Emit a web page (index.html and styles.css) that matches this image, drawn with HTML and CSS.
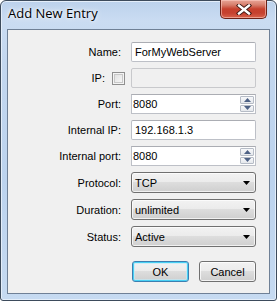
FILE: index.html
```html
<!DOCTYPE html>
<html>
<head>
<meta charset="utf-8">
<link rel="stylesheet" href="styles.css">
</head>
<body>
<div class="window">
  <div class="titlebar">
    <span class="title">Add New Entry</span>
    <div class="close">
      <svg width="16" height="11" viewBox="0 0 16 11">
        <path d="M3 1.5 L13 9.5 M13 1.5 L3 9.5" stroke="#3a1510" stroke-width="4.2" stroke-linecap="square"/>
        <path d="M3 1.5 L13 9.5 M13 1.5 L3 9.5" stroke="#ffffff" stroke-width="2.4" stroke-linecap="square"/>
      </svg>
    </div>
  </div>
  <div class="client">
    <div class="form">
      <label class="lbl">Name:</label>
      <div class="field text"><span>ForMyWebServer</span></div>

      <div class="lbl ip"><span>IP:</span><span class="check"></span></div>
      <div class="field text disabled"></div>

      <label class="lbl">Port:</label>
      <div class="field text spin"><span>8080</span>
        <div class="spinbtns">
          <div class="sb up"><svg width="7" height="4" viewBox="0 0 7 4"><path d="M0 4 L3.5 0 L7 4 Z" fill="#4d6185"/></svg></div>
          <div class="sb down"><svg width="7" height="4" viewBox="0 0 7 4"><path d="M0 0 L7 0 L3.5 4 Z" fill="#4d6185"/></svg></div>
        </div>
      </div>

      <label class="lbl">Internal IP:</label>
      <div class="field text"><span>192.168.1.3</span></div>

      <label class="lbl">Internal port:</label>
      <div class="field text spin"><span>8080</span>
        <div class="spinbtns">
          <div class="sb up"><svg width="7" height="4" viewBox="0 0 7 4"><path d="M0 4 L3.5 0 L7 4 Z" fill="#4d6185"/></svg></div>
          <div class="sb down"><svg width="7" height="4" viewBox="0 0 7 4"><path d="M0 0 L7 0 L3.5 4 Z" fill="#4d6185"/></svg></div>
        </div>
      </div>

      <label class="lbl">Protocol:</label>
      <div class="field select"><span>TCP</span><svg class="arrow" width="7" height="4" viewBox="0 0 7 4"><path d="M0 0 L7 0 L3.5 4 Z" fill="#000"/></svg></div>

      <label class="lbl">Duration:</label>
      <div class="field select"><span>unlimited</span><svg class="arrow" width="7" height="4" viewBox="0 0 7 4"><path d="M0 0 L7 0 L3.5 4 Z" fill="#000"/></svg></div>

      <label class="lbl">Status:</label>
      <div class="field select"><span>Active</span><svg class="arrow" width="7" height="4" viewBox="0 0 7 4"><path d="M0 0 L7 0 L3.5 4 Z" fill="#000"/></svg></div>
    </div>
    <div class="buttons">
      <div class="btn default">OK</div>
      <div class="btn">Cancel</div>
    </div>
  </div>
</div>
</body>
</html>
```
FILE: styles.css
```css
html, body {
  margin: 0;
  padding: 0;
  background: #ffffff;
}
.window {
  box-sizing: border-box;
  width: 277px;
  height: 301px;
  border: 1px solid #3d4b5c;
  border-radius: 6px 6px 3px 3px;
  background: linear-gradient(180deg, #bcd2ec 0px, #cadcf2 20px, #c3d7ef 60px, #bcd3ee 180px, #c6daf1 300px);
  box-shadow: inset 0 0 0 1px #e4eefa;
  padding: 0 6px 6px 6px;
  display: flex;
  flex-direction: column;
  font-family: "Liberation Sans", Arial, sans-serif;
  font-size: 11px;
  color: #000;
}
.titlebar {
  height: 28px;
  display: flex;
  align-items: flex-start;
  position: relative;
}
.title {
  font-family: "Open Sans", "Noto Sans", sans-serif;
  font-size: 13px;
  color: #000;
  margin-left: 1px;
  margin-top: 3px;
  text-shadow: 0 0 6px #ffffff, 0 0 3px #ffffff;
}
.close {
  position: absolute;
  right: 3px;
  top: -1px;
  width: 47px;
  height: 19px;
  box-sizing: border-box;
  border: 1px solid #6b2218;
  border-top: none;
  border-radius: 0 0 5px 5px;
  background: linear-gradient(180deg, #e8a597 0px, #d77e6c 5px, #c6402d 9px, #c5412f 13px, #d8624b 18px);
  box-shadow: inset 0 0 0 1px rgba(255,210,200,0.55);
  display: flex;
  align-items: center;
  justify-content: center;
}
.client {
  flex: 1;
  box-sizing: border-box;
  border: 1px solid #6f8096;
  background: #f0f0f0;
  padding: 12px 0 0 0;
}
.form {
  display: grid;
  grid-template-columns: 118px 125px;
  column-gap: 5px;
  row-gap: 6px;
}
.lbl {
  display: flex;
  align-items: center;
  justify-content: flex-end;
  padding-right: 5px;
  height: 20px;
  align-self: center;
}
.lbl.ip {
  padding-right: 1px;
}
.check {
  display: inline-block;
  box-sizing: border-box;
  width: 13px;
  height: 13px;
  margin-left: 7px;
  border: 1px solid #8f8f8f;
  background: linear-gradient(135deg, #dcdcdc, #fbfbfb);
  box-shadow: inset 0 0 0 1px #f4f4f4, inset 0 0 0 2px #c8c8c8;
}
.field {
  box-sizing: border-box;
  height: 20px;
  display: flex;
  align-items: center;
  position: relative;
}
.text {
  background: #fff;
  border: 1px solid #bdc0c7;
  border-top-color: #abadb3;
  border-radius: 2px;
  padding-left: 3px;
}
.disabled {
  background: #f0f0f0;
  border-color: #c8c9cc;
}
.spin {
  border-radius: 0;
  padding-left: 1px;
}
.spinbtns {
  position: absolute;
  right: 1px;
  top: 1px;
  bottom: 1px;
  width: 14px;
  display: flex;
  flex-direction: column;
  gap: 1px;
}
.sb {
  flex: 1;
  box-sizing: border-box;
  border: 1px solid #b6bcc6;
  border-radius: 1px;
  background: linear-gradient(180deg, #f7f8fa, #e5e8ec);
  display: flex;
  align-items: center;
  justify-content: center;
}
.select {
  height: 21px;
  border: 1px solid #707070;
  border-radius: 3px;
  background: linear-gradient(180deg, #f2f2f2 0%, #ebebeb 49%, #dddddd 50%, #cfcfcf 100%);
  box-shadow: inset 0 0 0 1px rgba(255,255,255,0.7);
  padding-left: 3px;
}
.select .arrow {
  position: absolute;
  right: 5px;
  top: 8px;
}
.buttons {
  display: flex;
  justify-content: flex-end;
  gap: 10px;
  margin-top: 14px;
  width: 248px;
}
.btn {
  box-sizing: border-box;
  width: 57px;
  height: 21px;
  border: 1px solid #707070;
  border-radius: 3px;
  background: linear-gradient(180deg, #f2f2f2 0%, #ebebeb 49%, #dddddd 50%, #cfcfcf 100%);
  box-shadow: inset 0 0 0 1px rgba(255,255,255,0.75);
  display: flex;
  align-items: center;
  justify-content: center;
}
.btn.default {
  border-color: #3c7fb1;
  box-shadow: inset 0 0 0 1px #48d0f4, inset 0 0 0 2px rgba(190,235,250,0.6);
}
```
